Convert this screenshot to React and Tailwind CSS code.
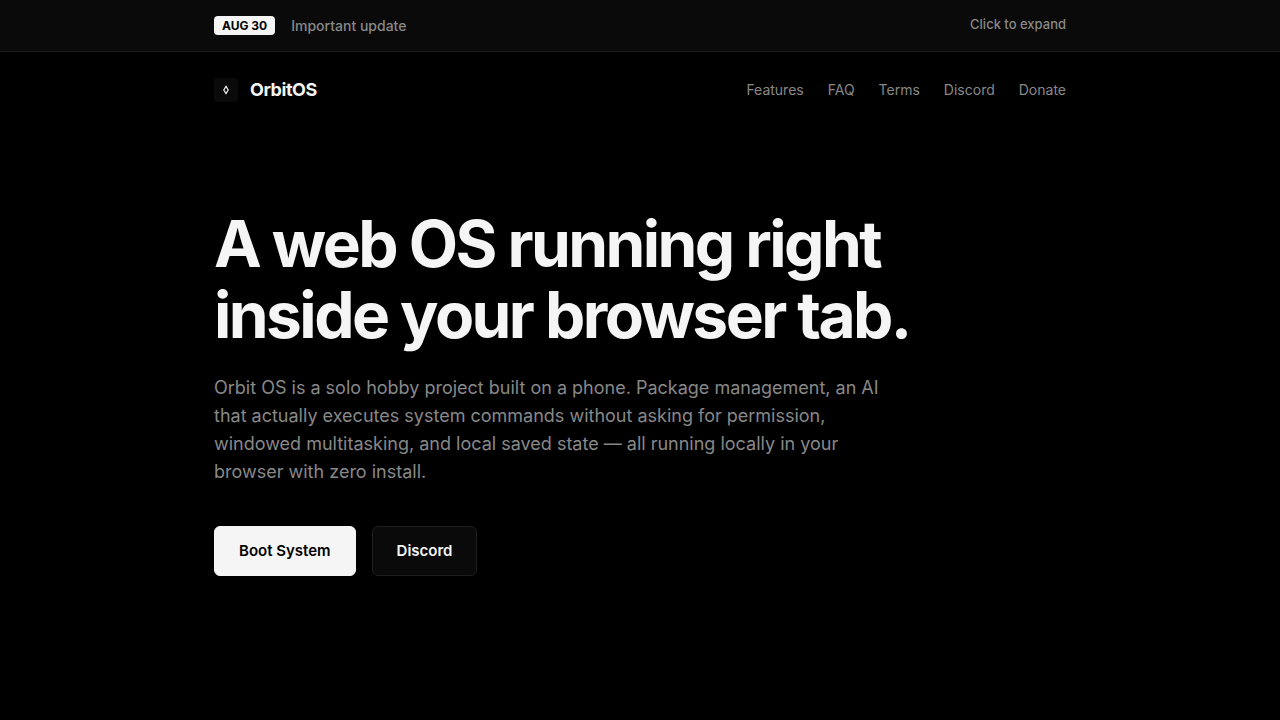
const navLinks = [
  { href: '#features', label: 'Features' },
  { href: '#faq', label: 'FAQ' },
  { href: '#terms', label: 'Terms' },
  { href: '#discord', label: 'Discord' },
  { href: '#donate', label: 'Donate' },
];

function UpdateBanner() {
  return (
    <div className="border-b border-[#1f1f1f] bg-[#0a0a0a]">
      <button
        type="button"
        className="mx-auto flex w-full max-w-[900px] items-start justify-between px-6 py-4 text-[#888888]"
      >
        <span className="flex items-center gap-4">
          <span className="rounded bg-[#f5f5f5] px-2 py-0.5 text-xs leading-[15px] font-bold text-black">
            AUG 30
          </span>
          <span className="text-sm leading-[19px] font-medium">Important update</span>
        </span>
        <span className="text-[13px] leading-[17px] font-medium">Click to expand</span>
      </button>
    </div>
  );
}

function Header() {
  return (
    <header className="mx-auto flex max-w-[900px] items-center justify-between px-6 py-6">
      <a href="#top" className="flex items-center gap-3">
        <span className="flex h-6 w-6 items-center justify-center rounded bg-[#0a0a0a]">
          <svg className="h-3 w-3" viewBox="0 0 12 12" fill="none" aria-hidden="true">
            <path d="M6 2.4 8.2 6 6 9.6 3.8 6Z" stroke="#f5f5f5" strokeWidth="1.2" />
          </svg>
        </span>
        <span className="text-lg font-bold tracking-tight text-[#f5f5f5]">OrbitOS</span>
      </a>
      <nav className="flex gap-6">
        {navLinks.map(({ href, label }) => (
          <a key={href} href={href} className="text-sm text-[#888888] hover:text-white">
            {label}
          </a>
        ))}
      </nav>
    </header>
  );
}

function Hero() {
  return (
    <main className="mx-auto max-w-[900px] px-6 py-20">
      <h1 className="mb-6 max-w-[800px] text-[64px] leading-[71px] font-bold tracking-[-0.04em] text-[#f5f5f5]">
        A web OS running right inside your browser tab.
      </h1>
      <p className="mb-10 max-w-[680px] text-lg text-[#888888]">
        Orbit OS is a solo hobby project built on a phone. Package management, an AI that
        actually executes system commands without asking for permission, windowed
        multitasking, and local saved state — all running locally in your browser with zero
        install.
      </p>
      <div className="flex gap-4">
        <a
          href="#boot"
          className="rounded-md border border-[#f5f5f5] bg-[#f5f5f5] px-6 py-3 text-[15px] leading-6 font-semibold text-black"
        >
          Boot System
        </a>
        <a
          href="#discord"
          className="rounded-md border border-[#1f1f1f] bg-[#0a0a0a] px-6 py-3 text-[15px] leading-6 font-semibold text-[#f5f5f5]"
        >
          Discord
        </a>
      </div>
    </main>
  );
}

export default function App() {
  return (
    <div id="top" className="min-h-screen bg-black font-['Inter',sans-serif] antialiased">
      <UpdateBanner />
      <Header />
      <Hero />
    </div>
  );
}
